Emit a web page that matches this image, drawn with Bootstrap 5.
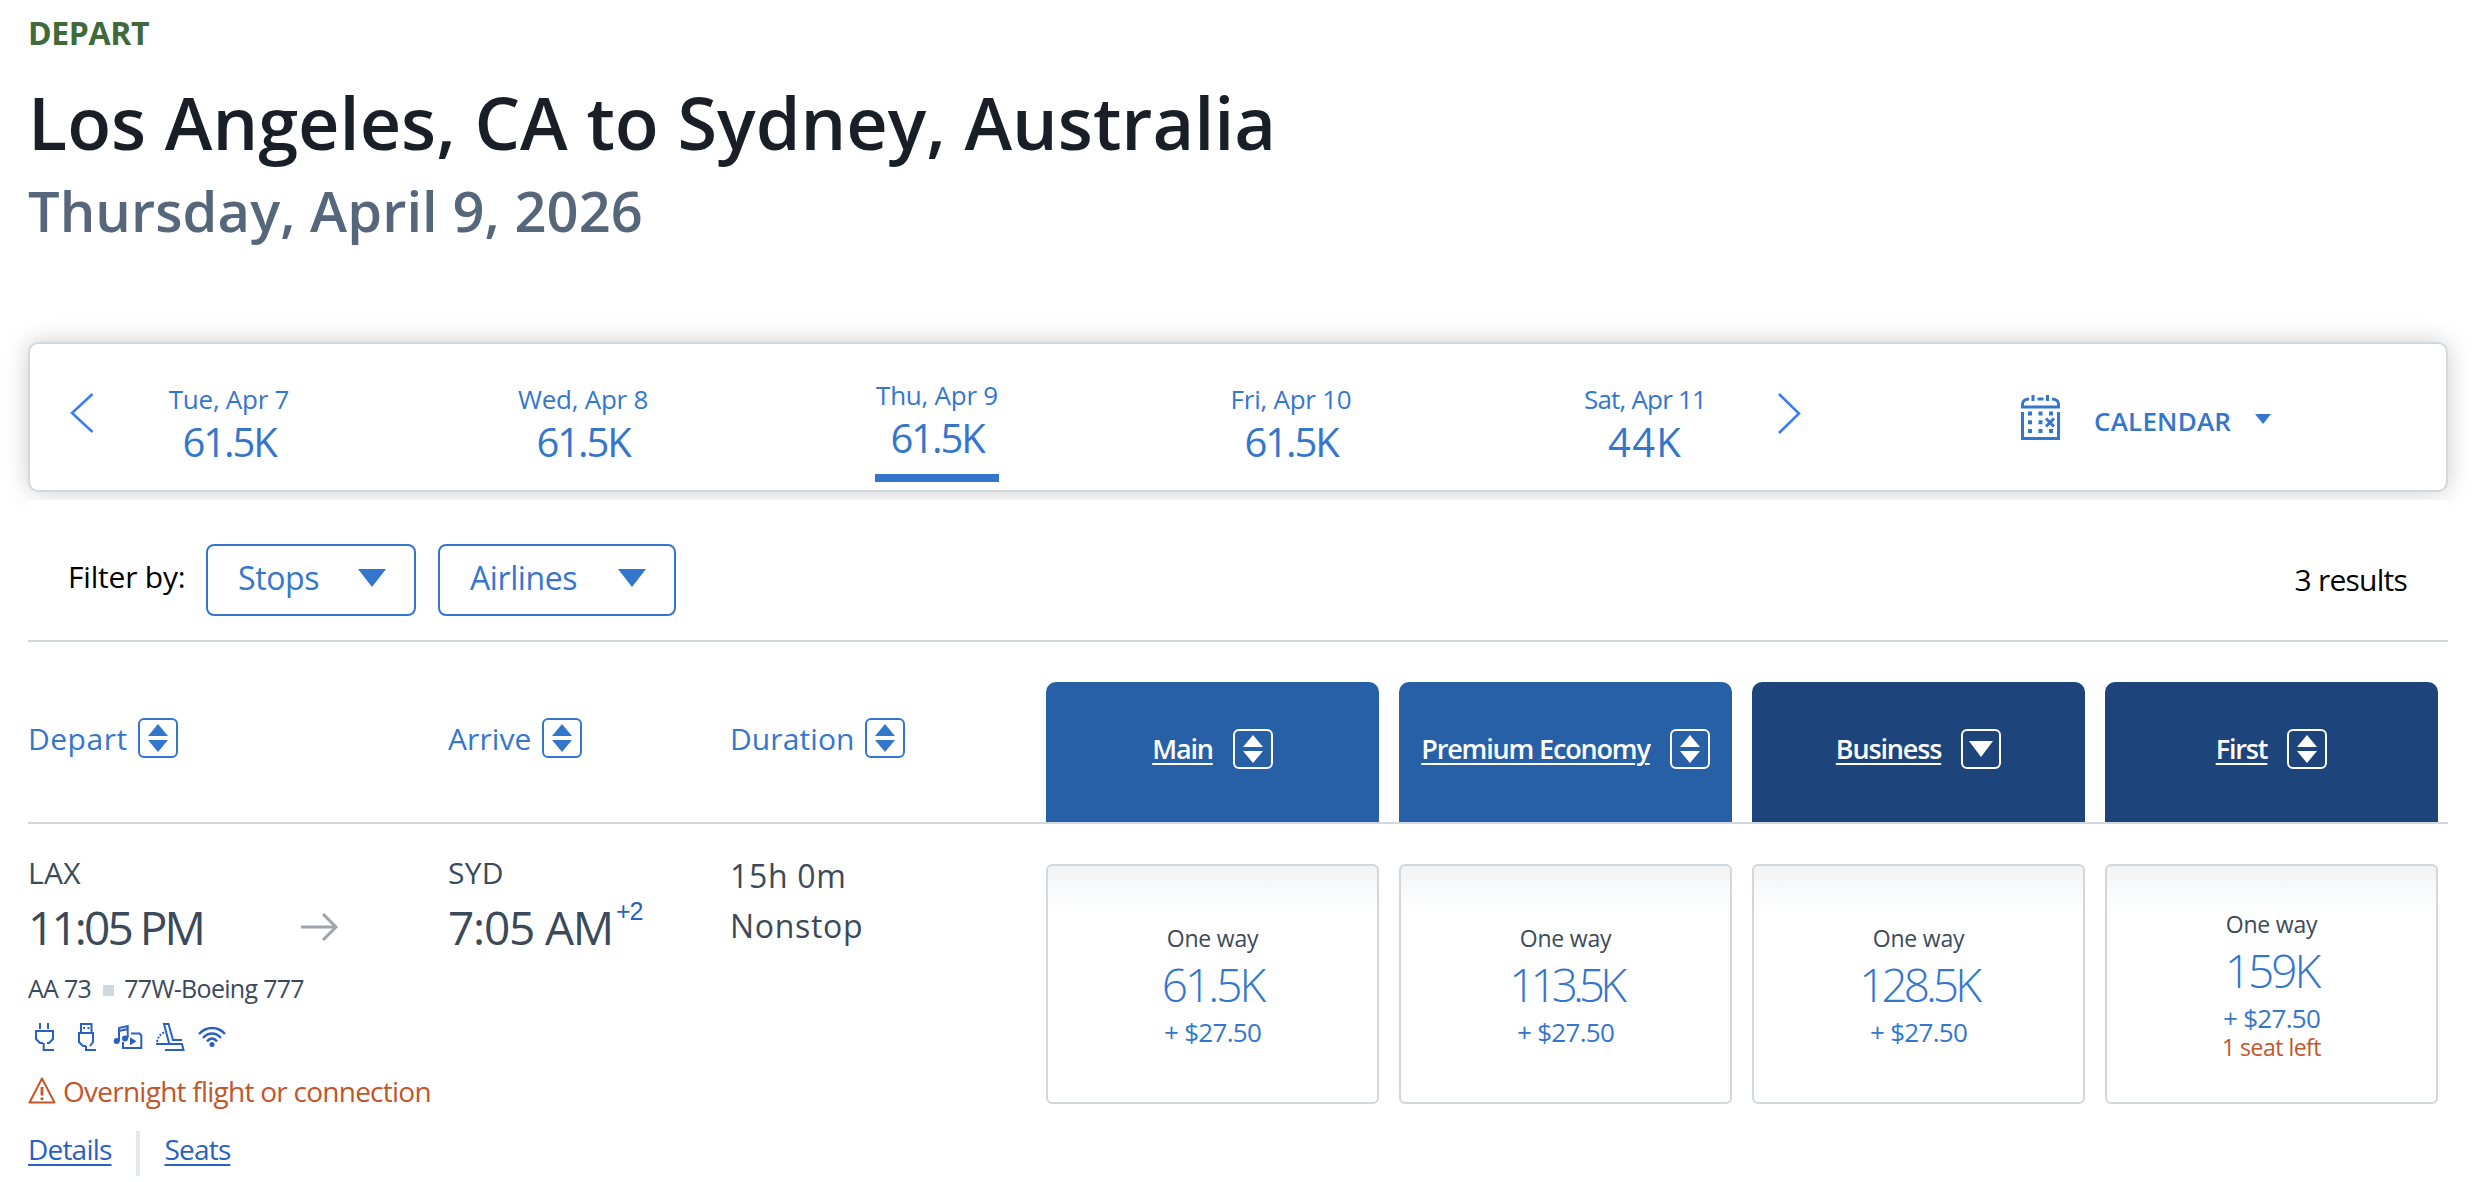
<!DOCTYPE html>
<html lang="en">
<head>
    <meta charset="UTF-8">
    <meta name="viewport" content="width=device-width, initial-scale=1.0">
    <title>Choose flights</title>
    <link rel="stylesheet" href="https://cdn.jsdelivr.net/npm/bootstrap@5.3.3/dist/css/bootstrap.min.css">
    <style>
        body {
            font-family: "Open Sans", "Noto Sans", sans-serif;
            color: #3b4a5a;
            background: #fff;
            overflow: hidden;
        }
        .page {
            width: 2448px;
            padding: 10px 0 0 28px;
        }
        svg {
            display: block;
            flex: none;
            overflow: visible;
        }
        .blue {
            color: #3576cd;
        }
        a {
            color: #2a5fc4;
        }

        /* heading */
        .direction {
            font-size: 32px;
            line-height: 45px;
            font-weight: 700;
            letter-spacing: -.4px;
            color: #41693a;
        }
        .route {
            margin: 23px 0 6px;
            font-size: 72px;
            line-height: 88px;
            font-weight: 600;
            color: #1a1f27;
        }
        .travel-date {
            font-size: 56px;
            line-height: 76px;
            font-weight: 600;
            letter-spacing: .08px;
            color: #56677c;
        }

        /* date carousel */
        .dates {
            height: 150px;
            margin: 94px 0 8px;
            padding-left: 40px;
            border: 2px solid #d0d8de;
            border-radius: 10px;
            box-shadow: 0 0 24px rgba(0, 0, 0, .2);
        }
        .dates .arrow-cell {
            width: 64px;
            padding-top: 49px;
        }
        .day {
            width: 190px;
            margin-right: 164px;
            padding-top: 37px;
        }
        .day.last {
            margin-right: 0;
        }
        .day.selected {
            padding-top: 33px;
        }
        .day-name {
            font-size: 26px;
            line-height: 36px;
            letter-spacing: -.25px;
        }
        .day-price {
            font-size: 40px;
            line-height: 50px;
            letter-spacing: -2.1px;
        }
        .last .day-name {
            letter-spacing: -.8px;
        }
        .last .day-price {
            letter-spacing: 1.2px;
        }
        .day.selected .bar {
            width: 124px;
            height: 8px;
            margin: 11px auto 0;
            background: #3576cd;
        }
        .calendar {
            padding: 51px 0 0 201px;
        }
        .calendar span {
            margin: 8px 24px 0 34px;
            font-size: 26px;
            line-height: 36px;
            font-weight: 600;
            letter-spacing: .2px;
        }

        /* filters */
        .filters {
            height: 142px;
            padding: 44px 41px 0 40px;
            background: #fff;
            border-bottom: 2px solid #d0d8de;
            color: #000;
            font-size: 30px;
            line-height: 72px;
        }
        .filters label {
            width: 138px;
            margin-top: -3px;
            letter-spacing: -.2px;
        }
        .filter-btn {
            width: 210px;
            height: 72px;
            margin-right: 22px;
            padding: 0 28px 4px 30px;
            border: 2px solid #3576cd;
            border-radius: 8px;
            background: #fff;
            font-size: 32px;
            letter-spacing: -.4px;
        }
        .filter-btn.airlines {
            width: 238px;
        }
        .results {
            letter-spacing: -.75px;
        }

        /* results grid */
        .flight-grid {
            display: grid;
            grid-template-columns: 420px 282px 296px 1412px;
            padding-right: 10px;
        }
        .fares {
            display: grid;
            grid-template-columns: repeat(4, 333px);
            gap: 20px;
            margin-left: 20px;
        }
        .header-row {
            height: 182px;
            padding-top: 40px;
            border-bottom: 2px solid #d0d8de;
        }
        .sorter {
            height: 40px;
            margin-top: 36px;
            gap: 10px;
            font-size: 30px;
            letter-spacing: .1px;
        }
        .sorter.first-sort {
            letter-spacing: .5px;
        }
        .cabin {
            height: 140px;
            padding-bottom: 6px;
            gap: 20px;
            border-radius: 10px 10px 0 0;
            background: #2760a6;
            color: #fff;
            font-size: 27px;
            font-weight: 600;
            letter-spacing: -1.15px;
        }
        .cabin.premium {
            background: #1d457b;
        }
        .cabin a {
            color: #fff;
            text-underline-offset: 4px;
            text-decoration-thickness: 2px;
        }
        .airport {
            margin-top: 29px;
            font-size: 30px;
            line-height: 40px;
            letter-spacing: .3px;
        }
        .clock {
            margin-top: 4px;
            font-size: 46px;
            line-height: 60px;
            letter-spacing: -1.2px;
        }
        .clock .hour {
            width: 273px;
            letter-spacing: -2.9px;
        }
        .clock sup {
            top: 0;
            margin: -32px 0 0 3px;
            font: 25px/36px "Liberation Sans", Arial, sans-serif;
            letter-spacing: -1px;
            color: #2a5fc4;
        }
        .duration {
            margin-top: 27px;
            font-size: 32px;
            line-height: 50px;
            letter-spacing: .7px;
        }
        .plane {
            margin-top: 13px;
            font-size: 25px;
            line-height: 36px;
            letter-spacing: -.7px;
        }
        .plane i {
            width: 11px;
            height: 11px;
            margin: 5px 10px 0 12px;
            background: #d0d8de;
        }
        .amenities {
            margin: 17px 0 20px 2px;
            gap: 14px;
            fill: none;
            stroke: #2a5fc4;
            stroke-width: 2;
        }
        .overnight {
            gap: 7px;
            font-size: 28px;
            line-height: 40px;
            letter-spacing: -.75px;
            white-space: nowrap;
            color: #c25529;
        }
        .flight-links {
            height: 45px;
            margin-top: 20px;
            font-size: 28px;
            line-height: 36px;
            letter-spacing: -.8px;
        }
        .flight-links a {
            text-underline-offset: 4px;
            text-decoration-thickness: 2px;
        }
        .flight-links .rule {
            width: 4px;
            height: 45px;
            margin: 0 24px 0 25px;
            background: #e3e8ec;
        }
        .fare {
            height: 240px;
            margin-top: 40px;
            border: 2px solid #d0d8de;
            border-radius: 6px;
            background: linear-gradient(#f1f3f5, #fff 46px);
            text-align: center;
        }
        .fare .trip {
            font-size: 23px;
            line-height: 34px;
            letter-spacing: -.2px;
        }
        .fare .miles {
            margin: 1px 0 4px;
            font-size: 46px;
            line-height: 56px;
            font-weight: 300;
            letter-spacing: -3px;
        }
        .fare .miles.wide {
            letter-spacing: -4px;
        }
        .fare .miles.tight {
            letter-spacing: -5px;
        }
        .fare .tax {
            font-size: 26px;
            line-height: 32px;
            letter-spacing: -.7px;
        }
        .fare .left {
            margin-bottom: 2px;
            font-size: 23px;
            line-height: 26px;
            letter-spacing: -.5px;
            color: #c25529;
        }
    </style>
</head>
<body>
    <svg width="0" height="0" class="position-absolute">
        <symbol id="sort" viewBox="0 0 40 40">
            <rect x="1" y="1" width="38" height="38" rx="5" fill="none" stroke="currentColor" stroke-width="2"/>
            <path d="M20 6l10 12H10zM20 34l10-12H10z" fill="currentColor"/>
        </symbol>
    </svg>

    <main class="page">
        <header>
            <div class="direction">DEPART</div>
            <h1 class="route">Los Angeles, CA to Sydney, Australia</h1>
            <div class="travel-date">Thursday, April 9, 2026</div>
        </header>

        <section class="dates d-flex blue text-center">
            <div class="arrow-cell"><svg width="24" height="40" fill="none" stroke="#3a7bf6" stroke-width="2.500"><path d="M22.500 1L2 20l20.500 19"/></svg></div>
            <div class="day"><div class="day-name">Tue, Apr 7</div><div class="day-price">61.5K</div></div>
            <div class="day"><div class="day-name">Wed, Apr 8</div><div class="day-price">61.5K</div></div>
            <div class="day selected"><div class="day-name">Thu, Apr 9</div><div class="day-price">61.5K</div><div class="bar"></div></div>
            <div class="day"><div class="day-name">Fri, Apr 10</div><div class="day-price">61.5K</div></div>
            <div class="day last"><div class="day-name">Sat, Apr 11</div><div class="day-price">44K</div></div>
            <div class="arrow-cell ps-4 ms-3"><svg width="24" height="40" fill="none" stroke="#3a7bf6" stroke-width="2.500"><path d="M-1 1l20 19.500L-1 40"/></svg></div>
            <div class="calendar d-flex">
                <svg width="39" height="45" fill="none" stroke="#3576cd" stroke-width="3">
                    <path d="M8 4C4 4 1.500 6 1.500 9v3h36V9c0-3-2.500-5-6.500-5M16.500 4h6M12 0v6M26.500 0v6M1.500 17v26.500h36V17"/>
                    <path d="M7 18.500h4M17.500 18.500h4M28 18.500h4M7 27.300h4M17.500 27.300h4M7 36h4M17.500 36h4M28 36h4" stroke-width="4"/>
                    <path d="M25 23.500l8 8M33 23.500l-8 8"/>
                </svg>
                <span>CALENDAR</span>
                <svg width="16" height="10" class="mt-4" fill="#3576cd"><path d="M0-5h16l-8 10z"/></svg>
            </div>
        </section>

        <section class="filters d-flex position-relative">
            <label>Filter by:</label>
            <button class="filter-btn blue d-flex align-items-center">Stops<svg class="ms-auto" width="28" height="18" fill="#3576cd"><path d="M0 0h28L14 18z"/></svg></button>
            <button class="filter-btn airlines blue d-flex align-items-center">Airlines<svg class="ms-auto" width="28" height="18" fill="#3576cd"><path d="M0 0h28L14 18z"/></svg></button>
            <span class="results ms-auto">3 results</span>
        </section>

        <section class="flight-grid header-row">
            <div class="sorter first-sort blue d-flex align-items-center">Depart<svg width="40" height="40"><use href="#sort"/></svg></div>
            <div class="sorter blue d-flex align-items-center">Arrive<svg width="40" height="40"><use href="#sort"/></svg></div>
            <div class="sorter blue d-flex align-items-center">Duration<svg width="40" height="40"><use href="#sort"/></svg></div>
            <div class="fares">
                <div class="cabin d-flex align-items-center justify-content-center"><a href="#">Main</a><svg width="40" height="40"><use href="#sort"/></svg></div>
                <div class="cabin d-flex align-items-center justify-content-center"><a href="#">Premium Economy</a><svg width="40" height="40"><use href="#sort"/></svg></div>
                <div class="cabin premium d-flex align-items-center justify-content-center"><a href="#">Business</a><svg width="40" height="40" fill="none"><rect x="1" y="1" width="38" height="38" rx="5" stroke="#fff" stroke-width="2"/><path d="M8 12h24L20 28z" fill="#fff"/></svg></div>
                <div class="cabin premium d-flex align-items-center justify-content-center"><a href="#">First</a><svg width="40" height="40"><use href="#sort"/></svg></div>
            </div>
        </section>

        <section class="flight-grid">
            <div>
                <div class="airport">LAX</div>
                <div class="clock d-flex align-items-center">
                    <span class="hour">11:05 PM</span>
                    <svg width="37" height="28" fill="none" stroke="#9da6aa" stroke-width="3"><path d="M0 14h35M22 1l13 13-13 13"/></svg>
                </div>
                <div class="plane d-flex align-items-center">AA 73<i></i>77W-Boeing 777</div>
                <div class="amenities d-flex">
                    <!-- power outlet -->
                    <svg width="28" height="28"><path d="M10 0v6M18 0v6M13 20h-3l-4-4V8h17v8l-4 4h-2M13.700 20v7H24"/></svg>
                    <!-- usb -->
                    <svg width="28" height="28"><path d="M9 9V1h10.500v8M11 5h2M15.500 5h2M14 23h-3l-4-4v-9h14v9l-3 4M14 23v4h10"/></svg>
                    <!-- entertainment -->
                    <svg width="28" height="28"><path d="M5 18V5l8.700-2v12M5 8l8.700-2M17 10.500h8.500l1.800 2V25H9v-6"/><g fill="#2a5fc4" stroke="none"><circle cx="2.700" cy="18" r="3"/><circle cx="11" cy="15.500" r="3"/><path d="M16 14.300l6.500 4-6.500 4z"/></g></svg>
                    <!-- lie-flat seat -->
                    <svg width="28" height="28"><path d="M13 20L8 1h4.500L17 17h9M0 21h26l1.500 6H9"/><path d="M1 19c1-5 3-8 8-10" stroke-dasharray="2 1.500"/></svg>
                    <!-- wifi -->
                    <svg width="28" height="28" stroke-width="2.300"><path d="M1 11c7.500-8 19-8 26 0M5 15c5-6 13-6 18 0M9 18.500c3-4 7-4 10 0"/><circle cx="14" cy="21.500" r="2.500" fill="#2a5fc4" stroke="none"/></svg>
                </div>
                <div class="overnight d-flex align-items-center">
                    <svg width="28" height="29" fill="none" stroke="#c25529" stroke-width="2"><path d="M14 1.500L1.500 25.500h25z" stroke-linejoin="round"/><path d="M14 10v8.500M14 20.500v2.500" stroke-width="2.800"/></svg>
                    Overnight flight or connection
                </div>
                <div class="flight-links d-flex">
                    <a href="#">Details</a><span class="rule"></span><a href="#">Seats</a>
                </div>
            </div>
            <div>
                <div class="airport">SYD</div>
                <div class="clock d-flex align-items-center">7:05 AM<sup>+2</sup></div>
            </div>
            <div class="duration">15h 0m<br>Nonstop</div>
            <div class="fares">
                <div class="fare d-flex flex-column justify-content-center"><div class="trip">One way</div><div class="miles blue">61.5K</div><div class="tax blue">+ $27.50</div></div>
                <div class="fare d-flex flex-column justify-content-center"><div class="trip">One way</div><div class="miles tight blue">113.5K</div><div class="tax blue">+ $27.50</div></div>
                <div class="fare d-flex flex-column justify-content-center"><div class="trip">One way</div><div class="miles wide blue">128.5K</div><div class="tax blue">+ $27.50</div></div>
                <div class="fare d-flex flex-column justify-content-center"><div class="trip">One way</div><div class="miles blue">159K</div><div class="tax blue">+ $27.50</div><div class="left">1 seat left</div></div>
            </div>
        </section>
    </main>

    <script src="https://cdn.jsdelivr.net/npm/bootstrap@5.3.3/dist/js/bootstrap.bundle.min.js"></script>
</body>
</html>
